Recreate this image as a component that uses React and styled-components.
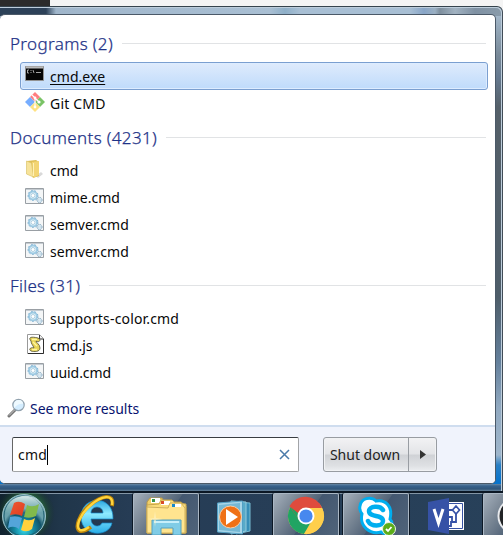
import React from 'react';
import styled, { createGlobalStyle, css } from 'styled-components';

const Global = createGlobalStyle`
  * { box-sizing: border-box; }
  body { margin: 0; overflow: hidden; font-family: "Noto Sans", "Open Sans", sans-serif; }
  svg { display: block; flex: none; }
`;
const Desktop = styled.div`
  width: 503px; height: 535px; overflow: hidden;
  display: flex; flex-direction: column; background: #f4f4f4;
`;
const Backdrop = styled.div`
  height: 6px; flex: none;
  background: linear-gradient(90deg, #2b2b2b 50px, #f4f4f4 50px);
`;
const Frame = styled.div`
  height: 485px; flex: none; padding: 7px 7px 7px 0;
  border-top: 1px solid #35434d; border-right: 1px solid #414c57;
  border-top-right-radius: 6px;
  box-shadow: inset -1px 1px 0 #bdcddb;
  background:
    linear-gradient(180deg, transparent 477px, #6687a4 477px, #37618c 479px, #305579 482px, #67839b 484px),
    linear-gradient(90deg, #2c4158 0 46px, #a0b6cb 56px, #a9bfd3 270px, #8eafc8 285px, #a8bfd4 300px, #a8bfd4 410px, #88a5c7 424px, #9bb0c3 435px, #7e8f9e 440px, #a1b2c1 455px, #7f91a3 475px, #899baa 100%) 0 0 / 100% 9px no-repeat,
    linear-gradient(180deg, #a3b7c9 8px, #788998 48px, #65798f 70px, #556069 100px, #4e5d69 290px, #64809c 355px, #91a9c0 400px, #9eb5cb 448px, #2a7fc4 458px, #0873cb 474px);
`;
const Panel = styled.main`
  height: 470px; width: 496px; display: flex; flex-direction: column;
  background: #fff; border: solid #4b5968; border-width: 1px 1px 1px 0;
  border-radius: 5px; overflow: hidden;
`;
const Results = styled.div`height: 410px; flex: none;`;
const Heading = styled.h2`
  margin: 0; height: ${p => p.$first ? 47 : 40}px;
  padding: ${p => p.$first ? '9px 10px 0' : '0 10px'};
  display: flex; align-items: center;
  color: #1e3287; font-size: 17px; font-weight: 300; white-space: nowrap;
  -webkit-text-stroke: .25px #1e3287;
  &::after { content: ''; height: 1px; flex: 1; margin: 1px -1px 0 9px; background: #e1e3e5; }
`;
const Label = styled.span`letter-spacing: ${p => p.$track || 0}px;`;
const Row = styled.div`
  height: ${p => p.$selected ? 28 : 27}px; margin: 0 7px 0 20px; padding-left: 5px;
  display: flex; align-items: center; gap: 5px; font-size: 14px; color: #080808; white-space: nowrap;
  ${p => p.$selected && css`
    padding-left: 4px; border: 1px solid #7b9fd0; border-radius: 3px;
    background: linear-gradient(#dfebfc, #bfdbfb);
    box-shadow: inset 0 0 0 1px #ddecff;
    ${Label} { text-decoration: underline; text-underline-offset: 2px; text-decoration-thickness: 1px; }
  `}
  svg { margin-top: -4px; }
`;
const More = styled.div`
  margin-top: 9px; height: 27px; padding-left: 7px; display: flex; align-items: center; gap: 4px;
  color: #07136f; font-size: 14px;
`;
const Footer = styled.footer`
  height: 58px; flex: none; padding: 10px 0 0 12px; display: flex; align-items: flex-start;
  border-top: 2px solid #cfddef; background: #f0f3fc;
`;
const Search = styled.div`
  width: 287px; height: 35px; margin-right: 24px; padding: 0 8px 0 5px; display: flex; align-items: center;
  background: #fff; border: 1px solid #a2a4a7; border-top-color: #393d42; border-left-color: #666;
  border-radius: 2px; font-size: 14px; color: #111;
`;
const Caret = styled.span`width: 1px; height: 20px; background: #000; margin-right: auto;`;
const Split = styled.div`
  width: 114px; height: 35px; display: flex; border: 1px solid #989ca2; border-radius: 3px;
  background: linear-gradient(#f2f2f4 0, #e3e4e7 48%, #d0d2d6 52%, #dfe1e4 85%, #eceef1);
  box-shadow: inset 0 0 0 1px #f1f2f4;
`;
const Power = styled.button`
  width: ${p => p.$arrow ? 27 : 85}px; height: 33px; padding: 0 ${p => p.$arrow ? 0 : 2}px 0 0; border: 0; background: transparent;
  display: flex; align-items: center; justify-content: center;
  border-right: ${p => p.$arrow ? '0' : '1px solid #999da3'};
  font-family: inherit; font-size: 14px; color: #222; white-space: nowrap;
`;
const Taskbar = styled.nav`
  height: 44px; flex: none; display: flex; border-top: 2px solid #0b1724;
  background: linear-gradient(90deg, #11232f 0, #20364a 60px, #263c55 130px, #28415a 503px);
  box-shadow: inset 0 1px 0 #8395a5;
`;
const Task = styled.div`
  width: ${p => p.$w}px; height: 42px; flex: none; overflow: hidden;
  ${p => p.$open && css`
    border: 1px solid #aab7c4; border-bottom: 0; border-radius: 2px 2px 0 0;
    box-shadow: -1px 0 #0c1825, 1px 0 #0c1825;
    background: linear-gradient(125deg, #a5b0bc 0, #7c8997 26%, #536579 52%, #435770 53%, #50647a 100%);
    svg { margin: -1px 0 0 -1px; }
  `}
`;
const Gap = styled.div`width: ${p => p.$w}px; flex: none;`;

const Console = () => <svg width="20" height="18" viewBox="0 0 20 18">
  <path d="M.5 1.5h18v14H.5z" fill="#050505" stroke="#929292" /><path d="M1 1.5h17v2H1z" fill="#bbb" />
  <path d="M4 5H2.5v3H4M6 5v1m0 1v1M8 5l1 3M11 7.5h5" fill="none" stroke="#ccc" strokeWidth=".8" />
</svg>;
const Git = () => <svg width="20" height="20" viewBox="0 0 20 20">
  <path d="M5 5l5-5 5 5-5 5z" fill="#ff7e80" /><path d="M15 5l5 5-5 5-5-5z" fill="#7ac366" />
  <path d="M5 5l5 5-5 5-5-5z" fill="#76adff" /><path d="M10 10l5 5-5 5-5-5z" fill="#ffe282" />
  <path d="M7 3l3 3v9M10 6l4 4" fill="none" stroke="#fff" strokeWidth="1.1" />
  <circle cx="10" cy="6" r="1.4" fill="#fff" /><circle cx="14" cy="10" r="1.6" fill="#fff" /><circle cx="10" cy="15" r="1.4" fill="#fff" />
</svg>;
const Folder = () => <svg width="20" height="20" viewBox="0 0 20 20">
  <path d="M11 17l5-4 2 2-5 4z" fill="#d9d9d9" /><path d="M2 2l9-1 3 2v14l-6 2z" fill="#dfbf55" />
  <path d="M7 3l7-1v14l-6 3z" fill="#f3d574" /><path d="M1.5 2l5 2 2 14-7-3z" fill="#f7e39a" stroke="#dbc46c" strokeWidth=".7" /><path d="M8.5 4v13" stroke="#fff1b6" />
</svg>;
const Batch = () => <svg width="20" height="18" viewBox="0 0 20 18">
  <path d="M.5 1.5h18v15H.5z" fill="#f4f6f7" stroke="#999fa4" /><path d="M1 2h17v1H1z" fill="#c4cbd1" />
  <circle cx="8" cy="8.5" r="4" fill="#e7f4fb" stroke="#9fcbe3" strokeWidth="2" />
  <circle cx="8" cy="8.5" r="5" fill="none" stroke="#77abcf" strokeDasharray="1.5 2" />
  <circle cx="8" cy="8.5" r="2" fill="#fff" stroke="#84b4cd" strokeWidth=".6" />
  <circle cx="14.5" cy="13" r="2.5" fill="#edf8fd" stroke="#779eb9" strokeDasharray="1.4 .6" /><circle cx="14.5" cy="13" r="1" fill="#fff" stroke="#8cb4ce" strokeWidth=".5" />
</svg>;
const Script = () => <svg width="20" height="20" viewBox="0 0 20 20">
  <path d="M2.5.5h12l4 4v15h-16z" fill="#fff" stroke="#999" /><path d="M18.5 5v14.5H3" stroke="#2d2d2d" fill="none" /><path d="M14.5 1v4h4" fill="#eee" stroke="#333" />
  <path d="M6 7C2 2 9 3 13 4c4 2 1 5-2 3 0 2 4 3 4 7 0 4-6 4-9 3-3-2 0-4 3-3-1-3-3-4-3-7z" fill="#e6d356" stroke="#4f4e35" strokeWidth=".8" />
  <path d="M7 5.5h5M8 8l4 4M7 15.5h5" stroke="#fff6a0" strokeWidth="1.3" />
</svg>;
const Glass = () => <svg width="19" height="21" viewBox="0 0 19 21">
  <path d="M8 12L2 18" stroke="#757575" strokeWidth="3" strokeLinecap="round" /><path d="M7.5 12L2 17.5" stroke="#ccc" />
  <circle cx="11.5" cy="7" r="5.7" fill="#d4edff" stroke="#92a2ae" strokeWidth="1.2" /><path d="M7 7q0-5 5-5 4 0 4 4-4-1-9 4" fill="#effaff" />
</svg>;
const Start = () => <svg width="62" height="42" viewBox="0 0 62 42">
  <defs><radialGradient id="orb" cx="50%" cy="82%"><stop stopColor="#34d9ed" /><stop offset=".45" stopColor="#14869e" /><stop offset=".8" stopColor="#10536a" /><stop offset="1" stopColor="#6aa1ac" /></radialGradient>
    <radialGradient id="glow"><stop offset=".65" stopColor="#296e3a" stopOpacity=".65" /><stop offset="1" stopColor="#17311f" stopOpacity="0" /></radialGradient>
    <linearGradient id="orbShine" x2="0" y2="1"><stop stopColor="#f2faf9" stopOpacity=".85" /><stop offset="1" stopColor="#6caaaa" stopOpacity=".15" /></linearGradient>
    <linearGradient id="red" x2="1" y2="1"><stop stopColor="#ed5932" /><stop offset="1" stopColor="#df3d23" /></linearGradient></defs>
  <circle cx="26" cy="20" r="29" fill="url(#glow)" /><circle cx="24" cy="23" r="21.5" fill="url(#orb)" stroke="#9dc2cc" /><circle cx="24" cy="23" r="20" fill="none" stroke="#216071" />
  <path d="M5 19C8-2 41-3 44 18Q24 26 5 19z" fill="url(#orbShine)" />
  <path d="M14 10q5-3 11 1l-3 12q-5-3-12-1z" fill="url(#red)" /><path d="M27 12q6 3 12-1l-3 12q-6 3-12 1z" fill="#82ba4c" />
  <path d="M10 24q6-2 12 1l-3 11q-5-4-11-1z" fill="#54a5d9" /><path d="M24 26q6 3 11-1l-3 11q-5 4-11 1z" fill="#ffd13d" />
</svg>;
const Explorer = () => <svg width="71" height="42" viewBox="0 0 71 42">
  <defs><linearGradient id="ie" x2="0" y2="1"><stop stopColor="#2ca8df" /><stop offset=".4" stopColor="#8eeaff" /><stop offset="1" stopColor="#29ade7" /></linearGradient></defs>
  <path d="M51 26H29c0 8 9 9 11 4h10C47 45 19 44 19 24 19 2 52 1 51 26zM29 20h12c0-8-12-8-12 0z" fill="url(#ie)" stroke="#1688c8" strokeWidth=".7" />
  <path d="M50 13C53-1 39 3 28 12 17 21 12 36 18 38q4 1 11-4" fill="none" stroke="#bd8509" strokeWidth="3.8" />
  <path d="M50 12C52 0 39 3 29 12 18 21 13 34 18 37q4 1 9-3" fill="none" stroke="#ffd43d" strokeWidth="2.4" />
</svg>;
const Files = () => <svg width="66" height="42" viewBox="0 0 66 42">
  <path d="M14 40V9l3-4h12l2 4h17l5 4v27z" fill="#f0cf69" stroke="#b89949" /><path d="M18 5h9v5h-9z" fill="#fff" /><path d="M19 6h3v3h-3z" fill="#369448" />
  <path d="M14 40V12l12-1 2-4h11l3 3 11 1v29z" fill="#f9dc7b" stroke="#c6a44f" /><path d="M28 8h9v4h-9z" fill="#fff" /><path d="M28 8h3v3h-3z" fill="#d84c2a" />
  <path d="M14 40V14l21 1 2-5h11l4 5v25z" fill="#ffe48f" stroke="#ceb05d" /><path d="M39 11h9v3h-9z" fill="#fff" /><path d="M39 11h3v3h-3z" fill="#1789cb" />
  <path d="M19 42V27h29v15h-8v-7H28v7z" fill="#80cce6" stroke="#54a0bf" /><path d="M21 29h25" stroke="#c7effa" strokeWidth="2" /><path d="M22 18l1 7 7 1-7 1-1 7-1-7-6-1 6-1z" fill="#fff5c8" opacity=".6" />
</svg>;
const Player = () => <svg width="74" height="42" viewBox="0 0 74 42">
  <path d="M37 9l14 1v28l-14 3z" fill="#368eb8" stroke="#79bcd2" /><path d="M32 8l15 1v29l-15 3z" fill="#58aac9" stroke="#94cadb" />
  <path d="M18.5 10l25-2v33l-25-2z" fill="#a7d5e8" stroke="#53a0c5" /><path d="M20 12l21-2v29l-21-2z" fill="#75b8d4" />
  <circle cx="31.5" cy="24" r="11" fill="#ef7116" stroke="#f6cfaa" /><path d="M27 16v16l12-8z" fill="#fff" />
</svg>;
const Chrome = () => <svg width="66" height="42" viewBox="0 0 66 42">
  <circle cx="33" cy="23" r="18" fill="#f8cd4d" /><path d="M33 23L17.4 14A18 18 0 0 0 31 41l8-14z" fill="#20a463" />
  <path d="M33 23l-8 3-8.5-13A18 18 0 0 1 49 15H33z" fill="#df4b3d" /><path d="M17.5 14l8 13h8z" fill="#20a463" />
  <path d="M49 15H33l7 13-9 13A18 18 0 0 0 49 15z" fill="#ffcf4c" /><circle cx="33" cy="23" r="8.5" fill="#fff" /><circle cx="33" cy="23" r="6.6" fill="#4788ef" />
</svg>;
const Skype = () => <svg width="66" height="42" viewBox="0 0 66 42">
  <path d="M33 8C28 3 18 5 17 13q-1 4 2 8c-3 12 8 21 19 18 6 4 12-1 11-8q0-3-2-5C50 14 43 6 33 8z" fill="#fff" stroke="#00aeef" strokeWidth="3" />
  <path d="M40 17c-3-5-14-4-14 1 0 7 14 3 14 10 0 6-12 6-15 0" fill="none" stroke="#00aeef" strokeWidth="4.5" strokeLinecap="round" />
  <circle cx="46" cy="36" r="6.5" fill="#5bad19" stroke="#eaf3e4" /><path d="M43 36l2 2 3.5-4" stroke="#fff" fill="none" strokeWidth="1.8" />
</svg>;
const Visio = () => <svg width="74" height="42" viewBox="0 0 74 42">
  <path d="M38 9h17v28H35V9z" fill="#fff" /><path d="M36 10.5h17.5v25H36" fill="none" stroke="#3652a3" />
  <path d="M19 9l21-4v36l-21-4z" fill="#3652a6" /><path d="M25 16l4.5 14L34 16" fill="none" stroke="#fff" strokeWidth="3" />
  <path d="M40 17h4M47 21v8h-5v4h-3M40 24h3v4" fill="none" stroke="#3652a6" strokeWidth="1.8" /><path d="M47 13l3.5 4-3.5 4-3.5-4z" fill="#fff" stroke="#3652a6" strokeWidth="1.7" />
</svg>;
const Dark = () => <svg width="66" height="42" viewBox="0 0 66 42"><circle cx="33" cy="23" r="17.5" fill="#222426" stroke="#e8eaed" strokeWidth="2" /></svg>;

const sections = [
  ['Programs (2)', .35, [['cmd.exe', Console, .05], ['Git CMD', Git, .2]]],
  ['Documents (4231)', .35, [['cmd', Folder, 0], ['mime.cmd', Batch, 0], ['semver.cmd', Batch, .05], ['semver.cmd', Batch, .05]]],
  ['Files (31)', .3, [['supports-color.cmd', Batch, .17], ['cmd.js', Script, 0], ['uuid.cmd', Batch, -.1]]],
];

export default function App() {
  return <><Global /><Desktop><Backdrop /><Frame><Panel>
    <Results>
      {sections.map(([title, track, rows], s) => <section key={title}>
        <Heading $first={s === 0}><Label $track={track}>{title}</Label></Heading>
        {rows.map(([name, Icon, spacing], i) => <Row key={i} $selected={s === 0 && i === 0}><Icon /><Label $track={spacing}>{name}</Label></Row>)}
      </section>)}
      <More><Glass /><Label $track={-.05}>See more results</Label></More>
    </Results>
    <Footer>
      <Search><Label $track={.2}>cmd</Label><Caret /><svg width="11" height="11" viewBox="0 0 11 11"><path d="M1 1l9 9M10 1L1 10" stroke="#497aaa" strokeWidth="1.5" /></svg></Search>
      <Split><Power><Label>Shut down</Label></Power><Power $arrow><svg width="6" height="9" viewBox="0 0 6 9"><path d="M0 0l6 4.5L0 9z" fill="#333" /></svg></Power></Split>
    </Footer>
  </Panel></Frame>
  <Taskbar><Task $w={62}><Start /></Task><Task $w={71}><Explorer /></Task><Task $w={66} $open><Files /></Task><Task $w={74}><Player /></Task><Task $w={66} $open><Chrome /></Task><Gap $w={4} /><Task $w={66} $open><Skype /></Task><Task $w={74}><Visio /></Task><Task $w={66} $open><Dark /></Task></Taskbar>
  </Desktop></>;
}
